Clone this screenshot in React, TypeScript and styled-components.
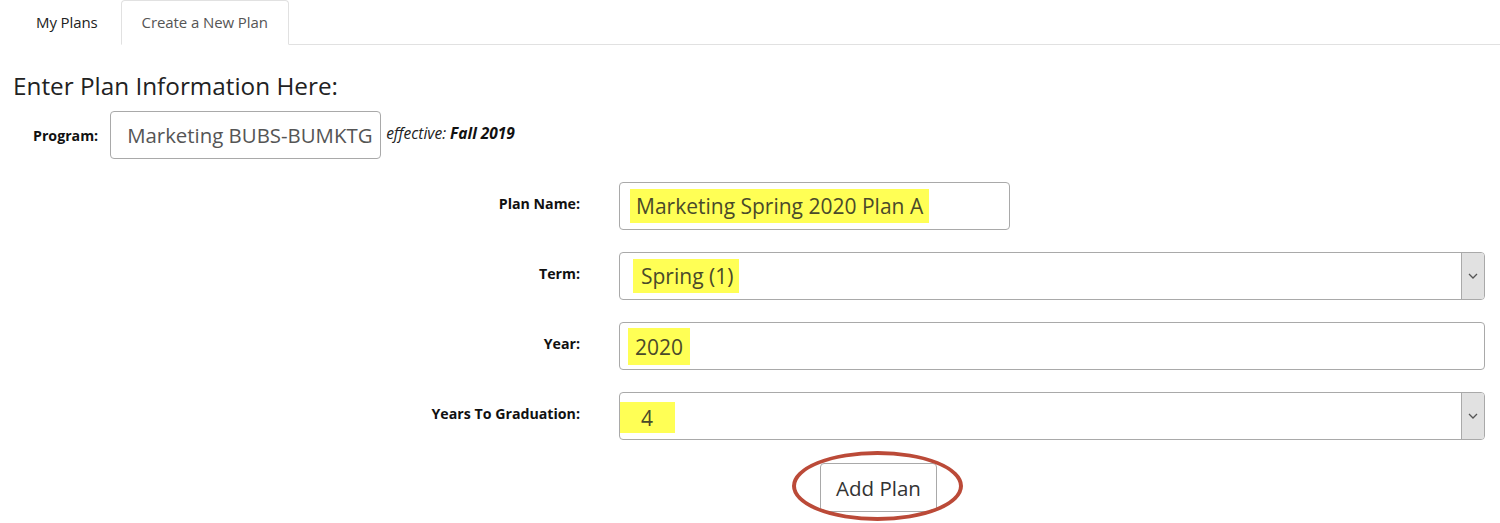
import React from "react";
import styled, { createGlobalStyle } from "styled-components";

const Global = createGlobalStyle`
  html, body { margin: 0; padding: 0; background: #fff; }
  body { font-family: "Open Sans", "Noto Sans", Arial, sans-serif; color: #222; }
`;

const Page = styled.div`
  width: 1500px;
  height: 523px;
  padding-left: 13px;
  box-sizing: border-box;
  overflow: hidden;
`;

const TabBar = styled.div`
  display: flex;
  align-items: flex-end;
  height: 45px;
  border-bottom: 1px solid #e1e1e1;
  box-sizing: border-box;
`;

const Tab = styled.div<{ $active?: boolean }>`
  height: 45px;
  box-sizing: border-box;
  display: flex;
  align-items: center;
  padding: 0 ${(p) => (p.$active ? "20px" : "22px")};
  font-size: 15px;
  letter-spacing: -0.1px;
  color: ${(p) => (p.$active ? "#555" : "#222")};
  border: 1px solid ${(p) => (p.$active ? "#e1e1e1" : "transparent")};
  border-bottom: 1px solid ${(p) => (p.$active ? "#fff" : "transparent")};
  border-radius: 4px 4px 0 0;
  margin-bottom: -1px;
  background: #fff;
  padding-bottom: 2px;
`;

const Heading = styled.h3`
  margin: 25px 0 0 0;
  font-size: 24.3px;
  font-weight: 400;
  line-height: 32px;
  color: #222;
  letter-spacing: 0;
`;

const ProgramRow = styled.div`
  display: flex;
  align-items: center;
  margin-top: 9px;
  padding-left: 20px;
`;

const Label = styled.div`
  font-size: 14.2px;
  font-weight: 700;
  color: #111;
  letter-spacing: 0;
  white-space: nowrap;
`;

const ProgramBox = styled.div`
  margin-left: 12px;
  width: 271px;
  height: 48px;
  box-sizing: border-box;
  border: 1px solid #a9a9a9;
  border-radius: 4px;
  display: flex;
  align-items: center;
  padding-left: 16px;
  font-size: 20.4px;
  color: #555;
  white-space: nowrap;
  overflow: hidden;
  letter-spacing: 0;
`;

const Effective = styled.div`
  margin-left: 5px;
  font-size: 15.5px;
  font-style: italic;
  color: #222;
  margin-top: -4px;
  letter-spacing: 0;
  b { font-weight: 700; color: #111; }
`;

const FormGrid = styled.div`
  display: grid;
  grid-template-columns: 567px 866px;
  column-gap: 39px;
  row-gap: 22px;
  margin-top: 23px;
  align-items: center;
`;

const FieldLabel = styled(Label)`
  text-align: right;
  margin-top: -6px;
`;

const Field = styled.div<{ $width?: number }>`
  position: relative;
  width: ${(p) => (p.$width ? `${p.$width}px` : "100%")};
  height: 48px;
  box-sizing: border-box;
  border: 1px solid #a9a9a9;
  border-radius: 4px;
  display: flex;
  align-items: flex-start;
  font-size: 21px;
  color: #555;
  background: #fff;
  overflow: hidden;
  letter-spacing: 0;
`;

const Mark = styled.span<{ $left: number; $top: number; $h: number; $pl: number; $pr: number }>`
  display: inline-flex;
  align-items: center;
  margin-left: ${(p) => p.$left}px;
  margin-top: ${(p) => p.$top}px;
  height: ${(p) => p.$h}px;
  padding: 0 ${(p) => p.$pr}px 0 ${(p) => p.$pl}px;
  background: #ffff55;
  color: #4a4a2a;
  white-space: nowrap;
`;

const Arrow = styled.div`
  position: absolute;
  top: 0;
  right: 0;
  bottom: 0;
  width: 22px;
  background: #e1e1e1;
  border-left: 1px solid #a9a9a9;
  display: flex;
  align-items: center;
  justify-content: center;
`;

const ButtonCell = styled.div`
  grid-column: 2;
  padding-left: 201px;
  margin-top: 1px;
`;

const CircleWrap = styled.div`
  position: relative;
  display: inline-block;
`;

const Ellipse = styled.div`
  position: absolute;
  left: -28px;
  right: -26px;
  top: -12px;
  bottom: -9px;
  border: 4px solid #bb4a38;
  border-radius: 50%;
  pointer-events: none;
`;

const Button = styled.button`
  width: 117px;
  height: 49px;
  box-sizing: border-box;
  border: 1px solid #a9a9a9;
  border-radius: 4px;
  background: #fff;
  font-family: "Open Sans", "Noto Sans", Arial, sans-serif;
  font-size: 20.5px;
  color: #333;
  letter-spacing: 0;
  padding: 0;
  display: flex;
  align-items: center;
  justify-content: center;
`;

const Chevron = () => (
  <svg width="10" height="6" viewBox="0 0 10 6">
    <path d="M1 1 L5 5 L9 1" fill="none" stroke="#555" strokeWidth="1.3" />
  </svg>
);

export default function App() {
  return (
    <Page>
      <Global />
      <TabBar>
        <Tab>My Plans</Tab>
        <Tab $active>Create a New Plan</Tab>
      </TabBar>
      <Heading>Enter Plan Information Here:</Heading>
      <ProgramRow>
        <Label>Program:</Label>
        <ProgramBox>Marketing BUBS-BUMKTG</ProgramBox>
        <Effective>
          effective: <b>Fall 2019</b>
        </Effective>
      </ProgramRow>
      <FormGrid>
        <FieldLabel>Plan Name:</FieldLabel>
        <Field $width={391}>
          <Mark $left={10} $top={6} $h={34} $pl={6} $pr={6}>
            Marketing Spring 2020 Plan A
          </Mark>
        </Field>

        <FieldLabel>Term:</FieldLabel>
        <Field>
          <Mark $left={13} $top={6} $h={34} $pl={8} $pr={6}>
            Spring (1)
          </Mark>
          <Arrow>
            <Chevron />
          </Arrow>
        </Field>

        <FieldLabel>Year:</FieldLabel>
        <Field>
          <Mark $left={8} $top={5} $h={37} $pl={7} $pr={7}>
            2020
          </Mark>
        </Field>

        <FieldLabel>Years To Graduation:</FieldLabel>
        <Field>
          <Mark $left={0} $top={9} $h={31} $pl={21} $pr={22}>
            4
          </Mark>
          <Arrow>
            <Chevron />
          </Arrow>
        </Field>

        <ButtonCell>
          <CircleWrap>
            <Button>Add Plan</Button>
            <Ellipse />
          </CircleWrap>
        </ButtonCell>
      </FormGrid>
    </Page>
  );
}
